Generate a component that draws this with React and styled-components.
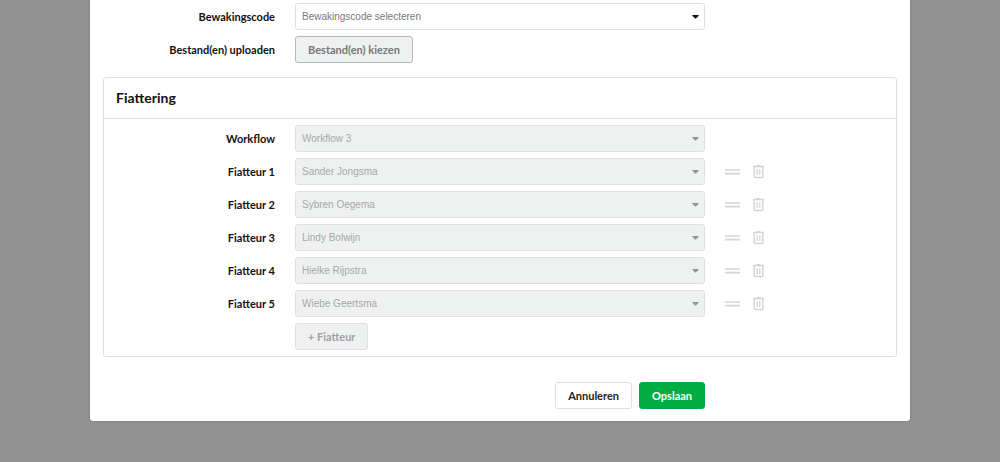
import React from "react";
import styled, { createGlobalStyle, css } from "styled-components";

const GlobalStyle = createGlobalStyle`
  *, *::before, *::after { box-sizing: border-box; }
  body {
    margin: 0;
    background: #929292;
    color: #111;
    font-family: Lato, "Open Sans", sans-serif;
    font-size: 11px;
    line-height: 16px;
  }
`;

const Page = styled.div`
  min-height: 100vh;
  padding: 0 16px 40px;
`;

const Modal = styled.main`
  max-width: 820px;
  margin: 0 auto;
  padding: 3px 13px 12px;
  background: #fff;
  border-radius: 0 0 3px 3px;
  box-shadow: 0 0 2px rgba(0, 0, 0, 0.25);
`;

const Rows = styled.div`
  display: flex;
  flex-direction: column;
  gap: 6px;
  padding: ${(p) => (p.$inset ? "6px 0" : "0 1px")};
`;

const Row = styled.div`
  display: grid;
  grid-template-columns: minmax(0, 171px) minmax(0, 410px) 1fr;
  column-gap: 20px;
  align-items: center;
`;

const Label = styled.label`
  grid-column: 1;
  text-align: right;
  font-weight: 700;
`;

const Field = styled.div`
  grid-column: 2;
  display: flex;
  gap: 7px;
  justify-content: ${(p) => (p.$end ? "flex-end" : "flex-start")};
`;

const SelectBox = styled.div`
  position: relative;
  width: 100%;
`;

const Select = styled.select`
  appearance: none;
  display: block;
  width: 100%;
  height: 27px;
  padding: 0 24px 0 6px;
  border: 1px solid #dde1e0;
  border-radius: 3px;
  background: #fff;
  color: #777;
  font: 10px "Liberation Sans", Arial, sans-serif;
  opacity: 1;
  &:disabled {
    background: #eff1f1;
    color: #a6a8a8;
  }
`;

const Caret = styled.svg`
  position: absolute;
  right: 6px;
  top: 12px;
  width: 7px;
  height: 4px;
  fill: ${(p) => (p.$muted ? "#949696" : "#111")};
  pointer-events: none;
`;

const variants = {
  plain: css`
    background: #fff;
    border-color: #dde1e0;
    color: #222;
  `,
  primary: css`
    background: #00ab41;
    border-color: #00ab41;
    color: #fff;
  `,
  file: css`
    background: #eff1f1;
    border-color: #b4b9b8;
    color: #777;
  `,
  muted: css`
    background: #eff1f1;
    border-color: #dde1e0;
    color: #a0a2a2;
  `,
};

const Button = styled.button`
  height: 27px;
  padding: 0 12px;
  border: 1px solid;
  border-radius: 3px;
  font: inherit;
  font-weight: 700;
  white-space: nowrap;
  ${(p) => variants[p.$variant]}
`;

const Panel = styled.section`
  margin-top: 14px;
  border: 1px solid #dde1e0;
  border-radius: 3px;
`;

const PanelTitle = styled.h2`
  margin: 0;
  padding: 10px 12px;
  border-bottom: 1px solid #dde1e0;
  font-size: 14px;
  line-height: 20px;
  font-weight: 700;
`;

const Actions = styled.div`
  display: flex;
  align-items: center;
  gap: 12px;
`;

const IconButton = styled.button`
  display: flex;
  padding: 0;
  border: 0;
  background: none;
  color: #d2d6d5;
`;

const Footer = styled.footer`
  margin-top: 25px;
  padding: 0 1px;
`;

function Dropdown({ id, value, disabled }) {
  return (
    <SelectBox>
      <Select id={id} disabled={disabled} defaultValue={value}>
        <option>{value}</option>
      </Select>
      <Caret $muted={disabled} viewBox="0 0 7 4" aria-hidden="true">
        <path d="M0.4 0h6.2v0.8L4 3.6H3L0.4 0.8z" />
      </Caret>
    </SelectBox>
  );
}

function DragIcon() {
  return (
    <svg width="15" height="14" viewBox="0 0 15 14" fill="none" stroke="currentColor" strokeWidth="1.7">
      <path d="M0 5h15M0 8.7h15" />
    </svg>
  );
}

function TrashIcon() {
  return (
    <svg width="13" height="14" viewBox="0 0 13 14" fill="none" stroke="currentColor" strokeWidth="1.5">
      <path d="M1 1.5h11M4.7 0.8h3.6M2.2 2v9.6q0 1 1 1h6.6q1 0 1-1V2" />
      <path d="M5.2 4.3v5.7M7.8 4.3v5.7" strokeWidth="1.3" />
    </svg>
  );
}

const approvers = ["Sander Jongsma", "Sybren Oegema", "Lindy Bolwijn", "Hielke Rijpstra", "Wiebe Geertsma"];

export default function App() {
  return (
    <Page>
      <GlobalStyle />
      <Modal>
        <Rows>
          <Row>
            <Label htmlFor="code">Bewakingscode</Label>
            <Field><Dropdown id="code" value="Bewakingscode selecteren" /></Field>
          </Row>
          <Row>
            <Label htmlFor="upload">Bestand(en) uploaden</Label>
            <Field><Button id="upload" type="button" $variant="file">Bestand(en) kiezen</Button></Field>
          </Row>
        </Rows>
        <Panel>
          <PanelTitle>Fiattering</PanelTitle>
          <Rows $inset>
            <Row>
              <Label htmlFor="workflow">Workflow</Label>
              <Field><Dropdown id="workflow" value="Workflow 3" disabled /></Field>
            </Row>
            {approvers.map((name, i) => (
              <Row key={name}>
                <Label htmlFor={`approver-${i}`}>Fiatteur {i + 1}</Label>
                <Field><Dropdown id={`approver-${i}`} value={name} disabled /></Field>
                <Actions>
                  <IconButton type="button" aria-label="Verplaatsen"><DragIcon /></IconButton>
                  <IconButton type="button" aria-label="Verwijderen"><TrashIcon /></IconButton>
                </Actions>
              </Row>
            ))}
            <Row>
              <Field><Button type="button" disabled $variant="muted">+ Fiatteur</Button></Field>
            </Row>
          </Rows>
        </Panel>
        <Footer>
          <Row>
            <Field $end>
              <Button type="button" $variant="plain">Annuleren</Button>
              <Button type="button" $variant="primary">Opslaan</Button>
            </Field>
          </Row>
        </Footer>
      </Modal>
    </Page>
  );
}
